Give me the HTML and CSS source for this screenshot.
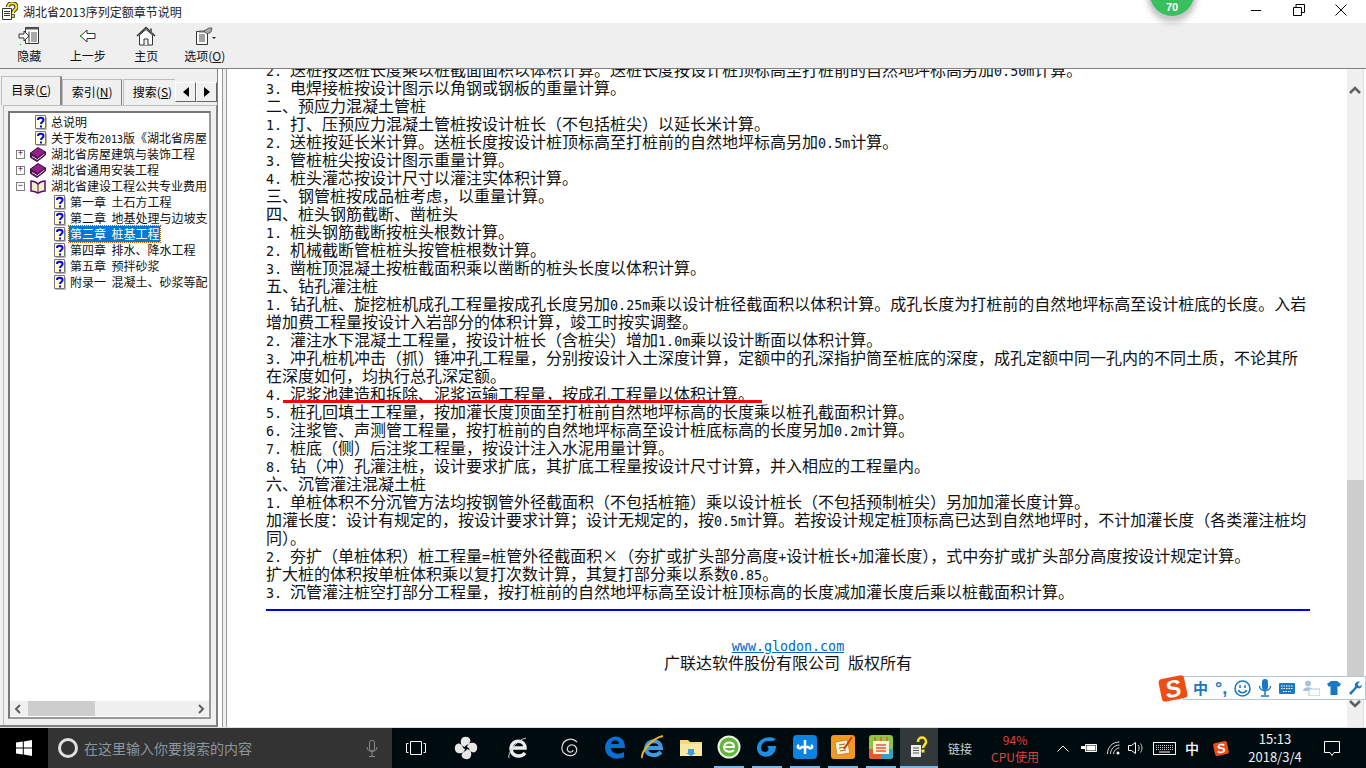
FILE: index.html
```html
<!DOCTYPE html>
<html lang="zh">
<head>
<meta charset="utf-8">
<title>湖北省2013序列定额章节说明</title>
<link rel="stylesheet" href="styles.css">
</head>
<body>
<svg class="defs" width="0" height="0">
  <symbol id="help" viewBox="0 0 13 15">
    <path d="M1.500.5h10v13h-10z" fill="#ffffd8" stroke="#777"/>
    <path d="M2.500 14.500h10v-12" fill="none" stroke="#b5b5b5"/>
    <path d="M4 5c0-3 5.500-3 5.500 0 0 2-2.500 2-2.500 4" fill="none" stroke="#0000e0" stroke-width="2"/>
    <path d="M6 10.500h2v2h-2z" fill="#0000e0"/>
  </symbol>
  <symbol id="book" viewBox="0 0 16 15">
    <path d="M.5 6 8 .5 15.500 5 8 11z" fill="#93208a" stroke="#3c0c3c"/>
    <path d="M.5 6v4.500L7 14.500l8.500-6.500V5L7.500 11z" fill="#6a0f6a" stroke="#3c0c3c"/>
    <path d="M2 9.500l5.500 3 7-5.500" fill="none" stroke="#e4d8e4"/>
  </symbol>
  <symbol id="open" viewBox="0 0 16 15">
    <path d="M1 2c3 0 5 1 7 3 2-2 4-3 7-3v10c-3 0-5 1-7 2-2-1-4-2-7-2z" fill="#f3efc8" stroke="#5b0f66" stroke-width="1.500"/>
    <path d="M8 5v9" stroke="#5b0f66"/>
  </symbol>
</svg>
<div class="app">
  <header class="title">
    <svg class="title-ico" width="17" height="18" viewBox="0 0 17 18"><path d="M1.500 6.500h9v11h-9z" fill="#fff" stroke="#333"/><path d="M3 9.500h6M3 11.500h6M3 13.500h6" stroke="#333"/><path d="M7 5c0-5 8.500-5 8.500 0 0 3-3.500 2.500-3.500 6" fill="none" stroke="#222" stroke-width="4"/><path d="M7 5c0-5 8.500-5 8.500 0 0 3-3.500 2.500-3.500 6" fill="none" stroke="#f5e61c" stroke-width="2.200"/><path d="M10.500 12.500h3v3h-3z" fill="#f5e61c" stroke="#222" stroke-width=".8"/></svg>
    <span class="title-text">湖北省2013序列定额章节说明</span>
    <div class="controls">
      <svg width="12" height="12" viewBox="0 0 12 12"><path d="M1 6.500h10" stroke="#000"/></svg>
      <svg width="12" height="12" viewBox="0 0 12 12"><path d="M.5 3.500h8v8h-8zM3 3.500v-3h8.500v8H8.500" fill="none" stroke="#000"/></svg>
      <svg width="12" height="12" viewBox="0 0 12 12"><path d="M.5.500l11 11M11.500.500l-11 11" stroke="#000"/></svg>
    </div>
  </header>
  <nav class="toolbar">
    <div class="tool">
      <svg width="22" height="20" viewBox="0 0 22 20"><path d="M7.500 1.500h13v16h-13z" fill="#fff" stroke="#333"/><path d="M7.500 1.500h13v2h-13z" fill="#555"/><path d="M11 5.500v11" stroke="#333"/><path d="M13 7h6M13 9h6M13 11h6M13 13h6M13 15h6" stroke="#555"/><path d="M1 8h5V5l5 5-5 5v-3H1z" fill="#f4f4f4" stroke="#333"/><path d="M2 19l1-1" stroke="#0a0"/></svg>
      <span>隐藏</span>
    </div>
    <div class="tool">
      <svg width="18" height="20" viewBox="0 0 18 14"><path d="M8 1 1.500 7 8 13V9.500h8v-5H8z" fill="#fff" stroke="#333"/><path d="M1 6h1v2H1z" fill="#0a0"/></svg>
      <span>上一步</span>
    </div>
    <div class="tool">
      <svg width="20" height="20" viewBox="0 0 20 20"><path d="M1 10 10 1.500 19 10" fill="none" stroke="#333" stroke-width="1.500"/><path d="M14 2.500h2v5l-2-2z" fill="#666"/><path d="M3.500 9v10h13V9L10 3.500z" fill="#fff" stroke="#333"/><path d="M8 19v-6h4v6" fill="#f0f0f0" stroke="#333"/></svg>
      <span>主页</span>
    </div>
    <div class="tool">
      <svg width="22" height="20" viewBox="0 0 22 20"><path d="M2.500 5.500h11v13h-11z" fill="#fff" stroke="#333"/><path d="M5 4.500h11v2H5z" fill="#666"/><path d="M5 9h6M5 11h6M5 13h6M5 15h6" stroke="#444"/><path d="M10 5l5-3h3l-1 4-4 2z" fill="#aaa" stroke="#333" stroke-width=".7"/><path d="M18 11h4l-2 2z" fill="#222"/></svg>
      <span>选项(<u>O</u>)</span>
    </div>
  </nav>
  <main class="main">
    <aside class="side">
      <div class="tabs">
        <span class="tab tab-on">目录(<u>C</u>)</span>
        <span class="tab tab-2">索引(<u>N</u>)</span>
        <span class="tab tab-3">搜索(<u>S</u>)</span>
        <span class="arrow"><svg width="6" height="10" viewBox="0 0 6 10"><path d="M6 0v10L0 5z" fill="#000"/></svg></span>
        <span class="arrow"><svg width="6" height="10" viewBox="0 0 6 10"><path d="M0 0v10l6-5z" fill="#000"/></svg></span>
      </div>
      <div class="panel">
        <div class="treebox">
          <ul class="tree">
            <li class="row r1"><svg class="ti"><use href="#help"/></svg><span>总说明</span></li>
            <li class="row r1"><svg class="ti"><use href="#help"/></svg><span>关于发布<span class="m10">2013</span>版《湖北省房屋</span></li>
            <li class="row"><i class="pm">+</i><svg class="ti"><use href="#book"/></svg><span>湖北省房屋建筑与装饰工程</span></li>
            <li class="row"><i class="pm">+</i><svg class="ti"><use href="#book"/></svg><span>湖北省通用安装工程</span></li>
            <li class="row"><i class="pm">−</i><svg class="ti"><use href="#open"/></svg><span>湖北省建设工程公共专业费用</span></li>
            <li class="row r2"><svg class="ti"><use href="#help"/></svg><span>第一章&nbsp;&nbsp;土石方工程</span></li>
            <li class="row r2"><svg class="ti"><use href="#help"/></svg><span>第二章&nbsp;&nbsp;地基处理与边坡支</span></li>
            <li class="row r2"><svg class="ti"><use href="#help"/></svg><span class="sel">第三章&nbsp;&nbsp;桩基工程</span></li>
            <li class="row r2"><svg class="ti"><use href="#help"/></svg><span>第四章&nbsp;&nbsp;排水、降水工程</span></li>
            <li class="row r2"><svg class="ti"><use href="#help"/></svg><span>第五章&nbsp;&nbsp;预拌砂浆</span></li>
            <li class="row r2"><svg class="ti"><use href="#help"/></svg><span>附录一&nbsp;&nbsp;混凝土、砂浆等配</span></li>
          </ul>
          <div class="hbar">
            <svg width="8" height="10" viewBox="0 0 8 10"><path d="M6 1 2 5l4 4" fill="none" stroke="#606060" stroke-width="2"/></svg>
            <span class="hthumb"></span>
            <svg width="8" height="10" viewBox="0 0 8 10"><path d="M2 1l4 4-4 4" fill="none" stroke="#606060" stroke-width="2"/></svg>
          </div>
        </div>
      </div>
    </aside>
    <div class="split"></div>
    <article class="doc">
      <div class="doc-in">
        <p><span class="m">2. </span>送桩按送桩长度乘以桩截面面积以体积计算。送桩长度按设计桩顶标高至打桩前的自然地坪标高另加<span class="m">0.50m</span>计算。</p>
        <p><span class="m">3. </span>电焊接桩按设计图示以角钢或钢板的重量计算。</p>
        <p>二、预应力混凝土管桩</p>
        <p><span class="m">1. </span>打、压预应力混凝土管桩按设计桩长（不包括桩尖）以延长米计算。</p>
        <p><span class="m">2. </span>送桩按延长米计算。送桩长度按设计桩顶标高至打桩前的自然地坪标高另加<span class="m">0.5m</span>计算。</p>
        <p><span class="m">3. </span>管桩桩尖按设计图示重量计算。</p>
        <p><span class="m">4. </span>桩头灌芯按设计尺寸以灌注实体积计算。</p>
        <p>三、钢管桩按成品桩考虑，以重量计算。</p>
        <p>四、桩头钢筋截断、凿桩头</p>
        <p><span class="m">1. </span>桩头钢筋截断按桩头根数计算。</p>
        <p><span class="m">2. </span>机械截断管桩桩头按管桩根数计算。</p>
        <p><span class="m">3. </span>凿桩顶混凝土按桩截面积乘以凿断的桩头长度以体积计算。</p>
        <p>五、钻孔灌注桩</p>
        <p><span class="m">1. </span>钻孔桩、旋挖桩机成孔工程量按成孔长度另加<span class="m">0.25m</span>乘以设计桩径截面积以体积计算。成孔长度为打桩前的自然地坪标高至设计桩底的长度。入岩增加费工程量按设计入岩部分的体积计算，竣工时按实调整。</p>
        <p><span class="m">2. </span>灌注水下混凝土工程量，按设计桩长（含桩尖）增加<span class="m">1.0m</span>乘以设计断面以体积计算。</p>
        <p><span class="m">3. </span>冲孔桩机冲击（抓）锤冲孔工程量，分别按设计入土深度计算，定额中的孔深指护筒至桩底的深度，成孔定额中同一孔内的不同土质，不论其所在深度如何，均执行总孔深定额。</p>
        <p><span class="m">4. </span>泥浆池建造和拆除、泥浆运输工程量，按成孔工程量以体积计算。</p>
        <p><span class="m">5. </span>桩孔回填土工程量，按加灌长度顶面至打桩前自然地坪标高的长度乘以桩孔截面积计算。</p>
        <p><span class="m">6. </span>注浆管、声测管工程量，按打桩前的自然地坪标高至设计桩底标高的长度另加<span class="m">0.2m</span>计算。</p>
        <p><span class="m">7. </span>桩底（侧）后注浆工程量，按设计注入水泥用量计算。</p>
        <p><span class="m">8. </span>钻（冲）孔灌注桩，设计要求扩底，其扩底工程量按设计尺寸计算，并入相应的工程量内。</p>
        <p>六、沉管灌注混凝土桩</p>
        <p><span class="m">1. </span>单桩体积不分沉管方法均按钢管外径截面积（不包括桩箍）乘以设计桩长（不包括预制桩尖）另加加灌长度计算。</p>
        <p>加灌长度：设计有规定的，按设计要求计算；设计无规定的，按<span class="m">0.5m</span>计算。若按设计规定桩顶标高已达到自然地坪时，不计加灌长度（各类灌注桩均同）。</p>
        <p><span class="m">2. </span>夯扩（单桩体积）桩工程量<span class="m">=</span>桩管外径截面积×（夯扩或扩头部分高度<span class="m">+</span>设计桩长<span class="m">+</span>加灌长度），式中夯扩或扩头部分高度按设计规定计算。</p>
        <p>扩大桩的体积按单桩体积乘以复打次数计算，其复打部分乘以系数<span class="m">0.85</span>。</p>
        <p><span class="m">3. </span>沉管灌注桩空打部分工程量，按打桩前的自然地坪标高至设计桩顶标高的长度减加灌长度后乘以桩截面积计算。</p>
        <hr class="rule">
        <footer class="foot">
          <a class="link">www.glodon.com</a>
          <div class="copy">广联达软件股份有限公司<span class="m"> </span>版权所有</div>
        </footer>
      </div>
      <div class="redline"></div>
    </article>
    <div class="vbar">
      <svg width="14" height="10" viewBox="0 0 14 10"><path d="M2 8l5-5 5 5" fill="none" stroke="#606060" stroke-width="2.500"/></svg>
      <span class="vthumb"></span>
      <svg width="14" height="10" viewBox="0 0 14 10"><path d="M2 2l5 5 5-5" fill="none" stroke="#606060" stroke-width="2.500"/></svg>
    </div>
  </main>
  <footer class="taskbar">
    <div class="start"><svg width="16" height="16" viewBox="0 0 16 16"><path d="M0 2.500 6.800 1.500v6H0zM7.800 1.400 16 0v7.500H7.800zM0 8.500h6.800v6L0 13.500zM7.800 8.500H16V16l-8.200-1.400z" fill="#fff"/></svg></div>
    <div class="search">
      <span class="ring"></span>
      <span class="hint">在这里输入你要搜索的内容</span>
      <svg class="mic" width="12" height="17" viewBox="0 0 12 17"><rect x="3.500" y=".5" width="5" height="10" rx="2" fill="none" stroke="#8a8a8a"/><path d="M1 7c0 6 10 6 10 0M6 12v4M3 16.500h6" fill="none" stroke="#8a8a8a"/></svg>
    </div>
    <div class="ti-wide tv"><svg width="20" height="14" viewBox="0 0 20 14"><path d="M4.500.5h11v13h-11zM2.500 2.500H.5v9h2M17.500 2.500h2v9h-2" fill="none" stroke="#fff"/></svg></div>
    <div class="ti-wide"><svg width="24" height="24" viewBox="0 0 24 24"><g fill="#e8e8e8"><path d="M11 11C6 10 6 5 8 2c4-3 10 0 8 4-1 3-4 2-5 5zM13 11c1-5 6-5 9-3 3 4 0 10-4 8-3-1-2-4-5-5zM13 13c5 1 5 6 3 9-4 3-10 0-8-4 1-3 4-2 5-5zM11 13c-1 5-6 5-9 3-3-4 0-10 4-8 3 1 2 4 5 5z"/></g></svg></div>
    <div class="ti-wide"><svg width="22" height="24" viewBox="0 0 22 24"><path d="M4 12h14c0-9-13-9-14 0 0 9 10 10 14 5" fill="none" stroke="#eee" stroke-width="3.500"/><path d="M2 22C0 18 9 4 19 2" fill="none" stroke="#ccc"/></svg></div>
    <div class="ti-wide"><svg width="20" height="20" viewBox="0 0 20 20"><path d="M17 4C12-1 3 1 2 9c-1 7 8 11 13 7 3-3 2-8-2-9-4-1-7 3-5 6 2 2 5 1 5-1" fill="none" stroke="#ddd" stroke-width="1.200"/></svg></div>
    <div class="pin"><svg width="22" height="24" viewBox="0 0 22 24"><path d="M1 12C2 3 10 0 15 2c5 2 6 7 6 11H7c0 6 8 7 13 4v5c-8 4-19 1-19-10zM7 9h8c0-5-7-5-8 0z" fill="#0a6fd0"/></svg></div>
    <div class="pin"><svg width="26" height="26" viewBox="0 0 26 26"><path d="M6 14h15c0-9-14-9-15 0 0 8 10 9 15 4" fill="none" stroke="#3d9ae0" stroke-width="4"/><path d="M2 24C1 18 12 4 23 2" fill="none" stroke="#e6b422" stroke-width="2"/></svg></div>
    <div class="pin"><svg width="24" height="20" viewBox="0 0 24 20"><path d="M1 3h8l2 2h12v14H1z" fill="#f8d775"/><path d="M1 7h22v12H1z" fill="#fbe7a5"/><path d="M9 12h6v4h2l-5 3-5-3h2z" fill="#3aa0dc"/></svg></div>
    <div class="pin run"><svg width="24" height="24" viewBox="0 0 24 24"><circle cx="12" cy="12" r="10.500" fill="#62b73a" stroke="#e8f4df" stroke-width="2"/><path d="M7 12h10c0-6-9-6-10 0 0 5 7 6 10 3" fill="none" stroke="#fff" stroke-width="2"/></svg></div>
    <div class="pin run"><svg width="24" height="24" viewBox="0 0 24 24"><path d="M21 4C12-1 2 5 2 13c0 9 11 11 16 6 3-3 3-7 3-8h-9c3 3 1 6-2 6-6 0-5-11 3-11 3 0 5 1 8-2z" fill="#1d8ee0"/></svg></div>
    <div class="pin run"><svg width="24" height="24" viewBox="0 0 24 24"><rect width="24" height="24" rx="4" fill="#0a84e0"/><path d="M12 5v14M6 10c-3 2 0 5 3 2h6c3 3 6 0 3-2" fill="none" stroke="#fff" stroke-width="2.500"/></svg></div>
    <div class="pin run"><svg width="24" height="24" viewBox="0 0 24 24"><rect width="24" height="24" rx="3" fill="#f39a1c"/><path d="M4 7l12-2 3 13-13 2z" fill="#fdf0d0" stroke="#a86a12" stroke-width=".6"/><path d="M8 10l6-1M8 13l7-1M9 16l6-1" stroke="#a86a12"/><path d="M21 2 13 14" stroke="#c2401c" stroke-width="2"/></svg></div>
    <div class="pin run"><svg width="24" height="24" viewBox="0 0 24 24"><rect width="24" height="24" rx="3" fill="#8cc63f"/><path d="M0 14h12v10H3a3 3 0 0 1-3-3z" fill="#e8582e"/><path d="M12 14h12v7a3 3 0 0 1-3 3h-9z" fill="#2da5c8"/><path d="M4 6h16v13H4z" fill="#fbf4dc"/><path d="M6 2v4M12 2v4M18 2v4M7 10h10M7 13h10M7 16h10" stroke="#e8582e" stroke-width="1.500"/></svg></div>
    <div class="pin run act"><svg width="18" height="22" viewBox="0 0 18 22"><path d="M1 9h10v12H1z" fill="#eee"/><path d="M3 12h6M3 14.500h6M3 17h6" stroke="#555"/><path d="M8 6c0-6 8-6 8 0 0 3-3 3-3 6" fill="none" stroke="#f5e61c" stroke-width="2.500"/><path d="M11.500 13.500h3v3h-3z" fill="#f5e61c"/></svg></div>
    <div class="link-lab">链接</div>
    <div class="cpu"><span>94%</span><span>CPU使用</span></div>
    <div class="tray w30"><svg width="12" height="7" viewBox="0 0 12 7"><path d="M.5 6.500 6 1l5.500 5.500" fill="none" stroke="#fff"/></svg></div>
    <div class="tray w22"><svg width="17" height="10" viewBox="0 0 17 10"><path d="M4.500 1.500h11v7h-11z" fill="none" stroke="#fff"/><path d="M5.500 2.500h9v5h-9zM0 3h4v3H0z" fill="#fff"/></svg></div>
    <div class="tray w28"><svg width="14" height="14" viewBox="0 0 14 14"><path d="M.5 13c0-7 5-12 12-12M3.500 13c0-5 4-9 9-9M6.500 13c0-3 3-6 6-6" fill="none" stroke="#ddd"/><circle cx="11" cy="12" r="1.500" fill="#fff"/></svg></div>
    <div class="tray w16"><svg width="16" height="12" viewBox="0 0 16 12"><path d="M.5 3.500h3l4-3v11l-4-3h-3z" fill="none" stroke="#fff"/><path d="M10 3c1.500 2 1.500 4 0 6M12.500 1.500c2 3 2 6 0 9" fill="none" stroke="#ccc"/></svg></div>
    <div class="tray w40"><svg width="23" height="13" viewBox="0 0 23 13"><rect x=".5" y=".5" width="22" height="12" fill="none" stroke="#fff"/><path d="M3 3.500h17M3 5.500h17M3 7.500h17" stroke="#ccc" stroke-dasharray="1 1"/><path d="M6 10h11" stroke="#fff"/></svg></div>
    <div class="tray w16 zh">中</div>
    <div class="tray w42"><span class="sg sg-s">S</span></div>
    <div class="clock"><span>15:13</span><span>2018/3/4</span></div>
    <div class="tray w48"><svg width="16" height="15" viewBox="0 0 16 15"><path d="M.5.500h15v11H10l-2 3-2-3H.5z" fill="none" stroke="#fff"/></svg></div>
  </footer>
  <div class="ball"><span>70</span></div>
  <div class="sogou">
    <span class="sg sg-l">S</span>
    <div class="sg-bar">
      <b class="sg-zh">中</b>
      <b class="sg-pt">°,</b>
      <svg width="17" height="17" viewBox="0 0 17 17"><circle cx="8.500" cy="8.500" r="7.500" fill="none" stroke="#1a78c2" stroke-width="1.600"/><path d="M6 5v3M11 5v3" stroke="#1a78c2" stroke-width="1.500"/><path d="M4.500 10c1 3.500 7 3.500 8 0" fill="none" stroke="#1a78c2" stroke-width="1.500"/></svg>
      <svg width="14" height="18" viewBox="0 0 14 18"><rect x="4" y="0" width="6" height="11" rx="3" fill="#1a78c2"/><path d="M1.500 7c0 6 11 6 11 0M7 12v4M3 17h8" fill="none" stroke="#1a78c2" stroke-width="1.500"/></svg>
      <svg width="16" height="11" viewBox="0 0 16 11"><rect width="16" height="11" rx="1" fill="#1a78c2"/><path d="M2 3h12M2 5.500h12M4 8.500h8" stroke="#fff" stroke-dasharray="1.500 1"/></svg>
      <svg width="18" height="16" viewBox="0 0 18 16"><circle cx="6" cy="3.500" r="3" fill="#a9c4da"/><path d="M1 11c0-5 10-5 10 0z" fill="#a9c4da"/><rect x="7" y="9" width="11" height="7" fill="#fff" stroke="#a9c4da"/></svg>
      <svg width="14" height="14" viewBox="0 0 14 14"><path d="M4 0h6l4 3-2 3-1.500-1v9h-7V5L2 6 0 3z" fill="#1a78c2"/></svg>
      <svg width="15" height="15" viewBox="0 0 15 15"><path d="M14 4c0 3-3 4-5 3l-6 7-2-2 6-6c-1-3 1-6 5-5.500L9.500 3.500l2 2z" fill="#1a78c2"/></svg>
    </div>
  </div>
</div>
</body>
</html>
```
FILE: styles.css
```css
* { box-sizing: border-box; }
html, body { margin: 0; padding: 0; }
body { font-family: "Noto Sans CJK SC", "Liberation Sans", sans-serif; color: #000; background: #fff; }
.defs { display: block; height: 0; }
.app { position: relative; width: 1366px; height: 768px; overflow: hidden; display: flex; flex-direction: column; }

.title { height: 23px; flex: none; display: flex; align-items: center; background: #fff; padding-left: 1px; }
.title-ico { flex: none; margin-top: -2px; }
.title-text { margin-left: 5px; font-size: 12px; line-height: 23px; color: #222; }
.controls { margin-left: auto; width: 138px; display: flex; justify-content: space-between; padding: 0 19px 3px 22px; align-items: center; }

.toolbar { height: 46px; flex: none; display: flex; background: #efefef; border-bottom: 1px solid #808080; }
.tool { width: 58.5px; display: flex; flex-direction: column; align-items: center; font-size: 12px; line-height: 16px; color: #111; padding-top: 3px; }
.tool svg { height: 20px; margin-bottom: 2px; }
.tool span { white-space: nowrap; }

.main { flex: none; height: 659px; display: flex; background: #fff; border-bottom: 1px solid #e0e0e0; }
.side { width: 218px; flex: none; background: #f0f0f0; border-right: 1px solid #808080; border-bottom: 2px solid #808080; display: flex; flex-direction: column; padding-top: 7px; }
.tabs { height: 29px; display: flex; align-items: flex-end; flex: none; padding-left: 1px; }
.tab { font-size: 12px; line-height: 23px; height: 26px; text-align: center; background: #f0f0f0; border: 1px solid #bdbdbd; border-bottom: 0; border-right-color: #808080; white-space: nowrap; overflow: hidden; }
.tab-on { width: 62px; height: 29px; line-height: 25px; border-right: 2px solid #888; }
.tab-2 { width: 60px; }
.tab-3 { width: 53px; margin-left: 1px; border-right: 0; text-align: left; padding-left: 9px; }
.arrow { width: 21px; height: 20px; margin-bottom: 3px; display: flex; align-items: center; justify-content: center; background: #f0f0f0; border: 1px solid #fff; border-right-color: #666; border-bottom-color: #666; }
.panel { flex: 1; margin: 0 0 0 3px; border: 1px solid #bdbdbd; border-right-color: #808080; border-bottom: 0; padding: 5px 5px 6px 4px; min-height: 0; }
.treebox { height: 100%; border: 2px solid #777; border-right-color: #999; border-bottom-color: #999; background: #fff; display: flex; flex-direction: column; }
.tree { list-style: none; margin: 0; padding: 1px 0 0 0; flex: 1; overflow: hidden; min-height: 0; }
.row { height: 16px; display: flex; align-items: center; font-size: 12px; line-height: 16px; white-space: nowrap; padding-left: 6px; color: #111; }
.row.r1 { padding-left: 24px; }
.row.r2 { padding-left: 43px; }
.ti { width: 16px; height: 15px; flex: none; margin-right: 5px; }
.row.r1 .ti, .row.r2 .ti { width: 13px; margin-right: 4px; }
.pm { width: 9px; height: 9px; flex: none; border: 1px solid #808080; font-style: normal; font-size: 9px; line-height: 7px; text-align: center; margin-right: 5px; font-family: "Liberation Mono", monospace; }
.sel { background: #0078d7; color: #fff; outline: 1px dotted #a85a00; padding: 0 1px; margin-left: -1px; }
.m10 { font-family: "DejaVu Sans Mono", monospace; font-size: 10px; line-height: 0; }
.hbar { height: 15px; flex: none; background: #f0f0f0; display: flex; align-items: center; margin-bottom: 1px; padding: 0 4px; }
.hthumb { width: 67px; height: 15px; background: #cdcdcd; margin: 0 auto 0 6px; }

.split { width: 9px; flex: none; background: #f0f0f0; border-left: 4px solid #fff; border-right: 1px solid #999; box-shadow: inset 1px 0 0 #999; }
.doc { position: relative; width: 1120px; flex: none; overflow: hidden; background: #fff; }
.doc-in { width: 1044px; margin: -9px 0 0 39px; font-size: 16px; line-height: 18px; color: #111; }
.doc-in p { margin: 0; }
.m { font-family: "DejaVu Sans Mono", monospace; font-size: 13.33px; line-height: 0; white-space: pre; }
.rule { height: 2px; margin: 9px 0 0; border: 0; background: #0000e6; }
.foot { text-align: center; margin-top: 29px; }
.link { display: block; font-family: "DejaVu Sans Mono", monospace; font-size: 13.33px; line-height: 14px; color: #0066cc; text-decoration: underline; }
.copy { font-size: 16px; line-height: 16px; }
.redline { position: absolute; left: 56px; top: 331px; width: 479px; height: 3px; background: #f00; }
.vbar { width: 17px; flex: none; background: #f0f0f0; display: flex; flex-direction: column; align-items: center; padding-top: 16px; border-right: 1px solid #e0e0e0; }
.vthumb { width: 17px; height: 215px; background: #cdcdcd; margin: 385px 0 0; }
.vbar svg:last-child { margin-top: 4px; }

.taskbar { flex: none; height: 40px; display: flex; align-items: stretch; background: #000b0f; color: #fff; }
.start { width: 48px; flex: none; background: #000; display: flex; align-items: center; justify-content: center; }
.search { width: 344px; flex: none; background: #333; display: flex; align-items: center; padding-left: 10px; }
.ring { width: 20px; height: 20px; border: 3px solid #e0e0e0; border-radius: 50%; flex: none; }
.hint { font-size: 14px; color: #8c959c; margin-left: 6px; line-height: 20px; }
.mic { margin-left: auto; margin-right: 14px; }
.ti-wide { width: 52px; flex: none; display: flex; align-items: center; justify-content: center; }
.tv { width: 48px; }
.pin { position: relative; width: 38px; flex: none; display: flex; align-items: center; justify-content: center; padding-bottom: 3px; }
.run::after { content: ""; position: absolute; left: 4px; right: 4px; bottom: 0; height: 2px; background: #76b9ed; }
.act { background: #33383a; }
.act::after { left: 0; right: 0; }
.link-lab { width: 44px; flex: none; font-size: 12px; color: #d0d0d0; display: flex; align-items: center; justify-content: center; }
.cpu { width: 66px; flex: none; display: flex; flex-direction: column; align-items: center; justify-content: center; font-size: 12px; line-height: 17px; color: #e2403f; }
.tray { flex: none; display: flex; align-items: center; justify-content: center; }
.w30 { width: 30px; } .w22 { width: 22px; } .w28 { width: 28px; } .w16 { width: 16px; } .w40 { width: 40px; } .w42 { width: 42px; } .w48 { width: 48px; }
.tray svg { flex: none; }
.zh { font-size: 14px; font-weight: 500; }
.clock { width: 66px; flex: none; display: flex; flex-direction: column; align-items: center; justify-content: center; font-size: 13px; line-height: 18px; white-space: nowrap; color: #f0f0f0; }

.ball { position: absolute; left: 1148px; top: -30px; width: 48px; height: 48px; border-radius: 50%; background: #39bf5e; border: 2px solid #c9c9c9; box-shadow: 0 4px 6px rgba(0,0,0,.25); display: flex; align-items: flex-end; justify-content: center; }
.ball span { font-family: "Liberation Sans", sans-serif; font-size: 11px; font-weight: 700; color: #fff; line-height: 13px; margin-bottom: 2px; }

.sogou { position: absolute; left: 1160px; top: 674px; height: 28px; width: 206px; display: flex; align-items: center; }
.sg { display: flex; align-items: center; justify-content: center; background: #ee4d14; color: #fff; font-family: "Liberation Sans", sans-serif; font-weight: 700; font-style: italic; transform: rotate(-12deg); }
.sg-l { position: relative; z-index: 1; width: 26px; height: 23px; border-radius: 4px; font-size: 24px; flex: none; }
.sg-s { width: 14px; height: 13px; border-radius: 2px; font-size: 13px; }
.sg-bar { flex: none; width: 183px; height: 24px; margin-left: -3px; background: #fff; border: 1px solid #b4c9dc; display: flex; align-items: center; justify-content: space-between; padding: 0 2px 0 9px; }
.sg-zh { font-size: 15px; color: #1a78c2; line-height: 18px; }
.sg-pt { font-size: 18px; color: #1a78c2; line-height: 18px; font-family: "Liberation Sans", sans-serif; }
```
